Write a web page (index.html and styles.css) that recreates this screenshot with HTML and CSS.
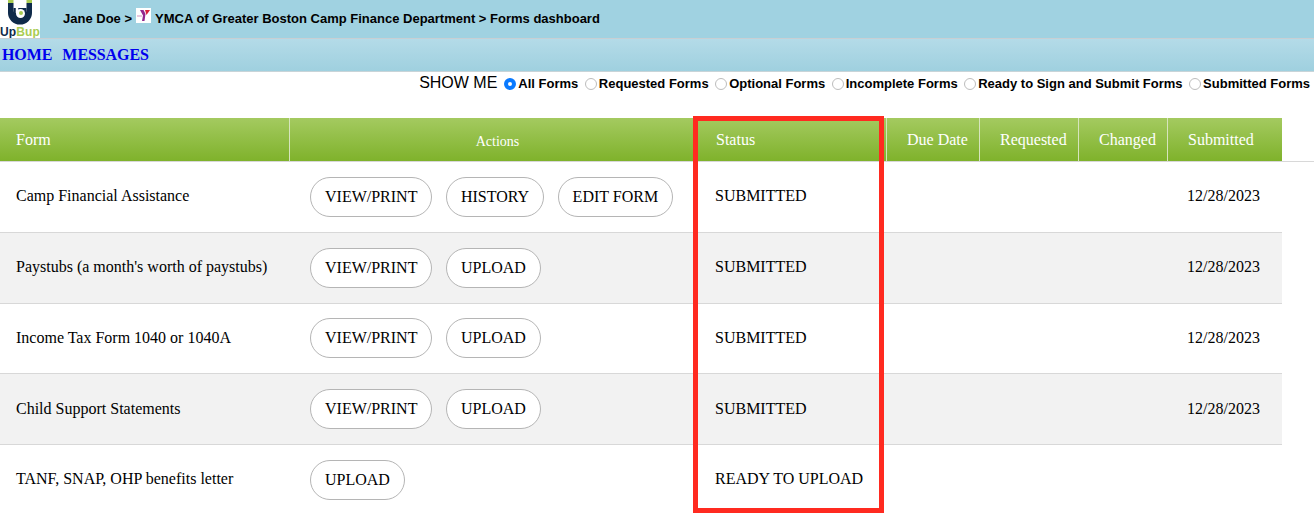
FILE: index.html
```html
<!DOCTYPE html>
<html lang="en">
<head>
<meta charset="utf-8">
<title>Forms dashboard</title>
<link rel="stylesheet" href="styles.css">
</head>
<body>
<header class="topbar">
  <div class="logo">
    <svg class="logo-mark" width="40" height="26" viewBox="0 0 40 26">
      <path d="M8 3h5.500v7c0 3.500 3 5 6.500 5s6.500-1.500 6.500-5V3H32v10a12 11.500 0 0 1-24 0z" fill="#0f2a4a"/>
      <path d="M13.500 8h13v7l-6.500 3-6.500-3z" fill="#0f2a4a"/>
      <path d="M8 0h5.500v3H8zM26.500 0H32v3h-5.500z" fill="#a9cc52"/>
      <path d="M17 7v6" stroke="#fff" stroke-width="2.500" fill="none"/>
      <circle cx="20.500" cy="13.500" r="4.500" fill="#fff"/>
      <circle cx="21" cy="13" r="2" fill="#a9cc52"/>
    </svg>
    <div class="logo-word"><span class="logo-up">Up</span><span class="logo-bup">Bup</span></div>
  </div>
  <div class="crumbs">
    <span>Jane Doe &gt;</span>
    <svg class="ymca" width="15" height="15" viewBox="0 0 15 15">
      <rect width="15" height="15" fill="#fff"/>
      <path d="M1 8h5" stroke="#dba6c8" stroke-width="1.200"/>
      <path d="M4 2h3.500L9.500 6 8.500 13H6l1-5.500z" fill="#92278f"/>
      <path d="M9 2h5l-3.500 5z" fill="#d8203c"/>
    </svg>
    <span>YMCA of Greater Boston Camp Finance Department &gt; Forms dashboard</span>
  </div>
</header>
<nav class="navbar">
  <a class="nav-link" href="#">HOME</a>
  <a class="nav-link" href="#">MESSAGES</a>
</nav>
<form class="filters">
  <span class="filters-title">SHOW ME</span>
  <label class="filter"><input type="radio" name="show" checked>All Forms</label>
  <label class="filter"><input type="radio" name="show">Requested Forms</label>
  <label class="filter"><input type="radio" name="show">Optional Forms</label>
  <label class="filter"><input type="radio" name="show">Incomplete Forms</label>
  <label class="filter"><input type="radio" name="show">Ready to Sign and Submit Forms</label>
  <label class="filter"><input type="radio" name="show">Submitted Forms</label>
</form>
<main class="table-wrap">
  <table class="forms">
    <colgroup>
      <col class="c-form"><col class="c-actions"><col class="c-status"><col class="c-due"><col class="c-req"><col class="c-chg"><col class="c-sub">
    </colgroup>
    <thead>
      <tr>
        <th class="head-form">Form</th>
        <th class="head-actions">Actions</th>
        <th class="head-status">Status</th>
        <th>Due Date</th>
        <th>Requested</th>
        <th>Changed</th>
        <th class="head-last">Submitted</th>
      </tr>
    </thead>
    <tbody>
      <tr>
        <td>Camp Financial Assistance</td>
        <td><div class="btns"><a class="btn" href="#">VIEW/PRINT</a><a class="btn" href="#">HISTORY</a><a class="btn" href="#">EDIT FORM</a></div></td>
        <td class="status">SUBMITTED</td><td></td><td></td><td></td><td class="date">12/28/2023</td>
      </tr>
      <tr>
        <td>Paystubs (a month's worth of paystubs)</td>
        <td><div class="btns"><a class="btn" href="#">VIEW/PRINT</a><a class="btn" href="#">UPLOAD</a></div></td>
        <td class="status">SUBMITTED</td><td></td><td></td><td></td><td class="date">12/28/2023</td>
      </tr>
      <tr class="row-short">
        <td>Income Tax Form 1040 or 1040A</td>
        <td><div class="btns"><a class="btn" href="#">VIEW/PRINT</a><a class="btn" href="#">UPLOAD</a></div></td>
        <td class="status">SUBMITTED</td><td></td><td></td><td></td><td class="date">12/28/2023</td>
      </tr>
      <tr class="row-low">
        <td>Child Support Statements</td>
        <td><div class="btns"><a class="btn" href="#">VIEW/PRINT</a><a class="btn" href="#">UPLOAD</a></div></td>
        <td class="status">SUBMITTED</td><td></td><td></td><td></td><td class="date">12/28/2023</td>
      </tr>
      <tr class="row-last">
        <td>TANF, SNAP, OHP benefits letter</td>
        <td><div class="btns"><a class="btn" href="#">UPLOAD</a></div></td>
        <td class="status">READY TO UPLOAD</td><td></td><td></td><td></td><td></td>
      </tr>
    </tbody>
  </table>
</main>
<div class="highlight"></div>
</body>
</html>
```
FILE: styles.css
```css
* { box-sizing: border-box; }
html, body { margin: 0; padding: 0; }
body {
  background: #fff;
  color: #000;
  font-family: "Liberation Serif", "Times New Roman", serif;
  height: 519px;
  overflow: hidden;
  position: relative;
}
.topbar {
  display: flex;
  align-items: center;
  height: 38px;
  background: #a0d2e1;
}
.logo {
  width: 40px;
  height: 38px;
  background: #fff;
  overflow: hidden;
  flex: none;
}
.logo-mark { display: block; }
.logo-word {
  font-family: "Liberation Sans", Arial, sans-serif;
  font-size: 12px;
  font-weight: bold;
  line-height: 12px;
  text-align: center;
  white-space: nowrap;
  letter-spacing: 0.1px;
}
.logo-up { color: #0f2a4a; }
.logo-bup { color: #a9cc52; }
.crumbs {
  display: flex;
  align-items: center;
  gap: 4px;
  margin-left: 23px;
  margin-bottom: 2px;
  font-family: "Liberation Sans", Arial, sans-serif;
  font-weight: bold;
  font-size: 13px;
  white-space: nowrap;
}
.ymca { display: block; margin-top: -5px; }
.navbar {
  display: flex;
  align-items: center;
  gap: 10px;
  height: 34px;
  padding-left: 2px;
  background: linear-gradient(#b4dbe8, #9fd0df);
  border-top: 1px solid #c8cfd3;
  border-bottom: 1px solid #c8d4d8;
}
.nav-link {
  color: #0000ee;
  font-weight: bold;
  font-size: 16px;
  letter-spacing: -0.08px;
  text-decoration: none;
}
.filters {
  display: flex;
  justify-content: flex-end;
  align-items: center;
  height: 24px;
  padding-right: 4px;
  font-family: "Liberation Sans", Arial, sans-serif;
  white-space: nowrap;
}
.filters-title { font-size: 16px; margin-right: 7px; margin-top: -2px; }
.filter {
  display: flex;
  align-items: center;
  font-size: 13px;
  font-weight: bold;
  margin-left: 6.5px;
  margin-bottom: 2px;
}
.filters-title + .filter { margin-left: 0; }
.filter input {
  appearance: none;
  width: 12px;
  height: 12px;
  margin: 2px 2px 0 0;
  background: #fff;
  border: 1px solid #bdbdbd;
  border-radius: 50%;
}
.filter input:checked {
  border: 4px solid #0a7aff;
}
.table-wrap {
  margin-top: 22px;
}
.forms {
  table-layout: fixed;
  border-collapse: separate;
  border-spacing: 0;
  width: 1282px;
  font-size: 16px;
}
.c-form { width: 290px; }
.c-actions { width: 397px; }
.c-status { width: 200px; }
.c-due { width: 93px; }
.c-req { width: 99px; }
.c-chg { width: 89px; }
.c-sub { width: 114px; }
.forms th {
  height: 44px;
  padding: 1px 0 0 20px;
  background: linear-gradient(#a4ca60, #7fb22b);
  color: #fff;
  font-weight: normal;
  font-size: 16px;
  text-align: left;
  border-right: 1px solid #d6e4bd;
  border-bottom: 1px solid #d8d8d8;
}
.forms th.head-form { padding-left: 16px; }
.forms th.head-actions {
  padding: 4px 0 0 18px;
  font-size: 14px;
  text-align: center;
  border-right: 0;
}
.forms th.head-status { padding-left: 29px; }
.forms th.head-last { border-right: 0; position: relative; }
.forms th.head-last::after {
  content: "";
  position: absolute;
  left: 100%;
  bottom: -1px;
  width: 32px;
  height: 1px;
  background: #d8d8d8;
}
.forms td {
  height: 71px;
  padding: 0 0 2px 16px;
  border-bottom: 1px solid #d8d8d8;
  vertical-align: middle;
  white-space: nowrap;
}
.forms td:nth-child(2) { padding: 0 0 0 20px; }
.forms td.status { padding-left: 28px; }
.forms td.date { padding-left: 19px; }
.forms tbody tr:nth-child(even) td { background: #f2f2f2; }
.forms .row-short td { height: 70px; }
.forms .row-short td:nth-child(2) { padding-bottom: 2px; }
.forms .row-low td { padding-bottom: 0; }
.forms .row-last td { border-bottom: 0; padding-bottom: 4px; }
.forms .row-last td:nth-child(2) { padding-bottom: 2px; }
.btns { display: flex; gap: 13.5px; }
.btn {
  display: flex;
  align-items: center;
  height: 40px;
  padding: 0 14px;
  background: #fff;
  border: 1px solid #b5b5b5;
  border-radius: 20px;
  color: #000;
  font-size: 16px;
  text-decoration: none;
}
.highlight {
  position: absolute;
  left: 693px;
  top: 116px;
  width: 191px;
  height: 397px;
  border: 5px solid #ff2a20;
}
```
